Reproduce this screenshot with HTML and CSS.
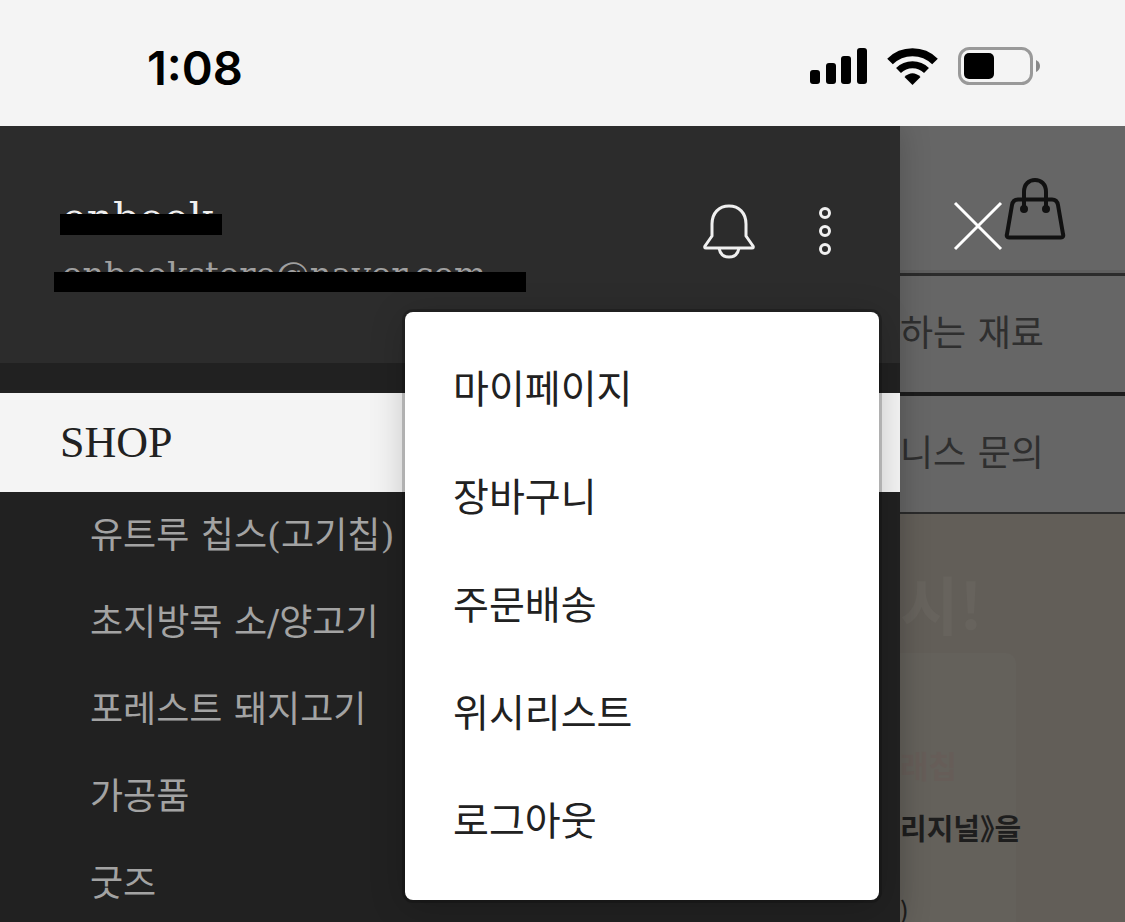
FILE: index.html
```
<!DOCTYPE html>
<html lang="ko">
<head>
    <meta charset="UTF-8">
    <meta name="viewport" content="width=device-width, initial-scale=1.0">
    <title>SHOP</title>
    <link rel="stylesheet" href="styles.css">
</head>
<body>
    <div class="status-bar">
        <span class="time">1:08</span>
        <div class="status-icons">
            <svg width="58" height="36" viewBox="0 0 58 36" aria-hidden="true">
                <rect x="1" y="22" width="10" height="14" rx="3"/>
                <rect x="17" y="15" width="10" height="21" rx="3"/>
                <rect x="32" y="8" width="10" height="28" rx="3"/>
                <rect x="48" y="0" width="10" height="36" rx="3"/>
            </svg>
            <svg width="51" height="37" viewBox="0 0 51 37" aria-hidden="true">
                <path d="M3 13.500 A32 32 0 0 1 48 13.500" fill="none" stroke="#000" stroke-width="8"/>
                <path d="M11.500 22.500 A20 20 0 0 1 39.500 22.500" fill="none" stroke="#000" stroke-width="7"/>
                <path d="M17.500 29 Q25.500 21.500 33.500 29 L25.500 37 Z"/>
            </svg>
            <svg width="83" height="38" viewBox="0 0 83 38" aria-hidden="true">
                <rect x="1.500" y="1.500" width="72" height="35" rx="10" fill="none" stroke="#999" stroke-width="3"/>
                <rect x="6" y="6" width="30" height="26" rx="5"/>
                <path d="M78 13 Q82 15 82 19 Q82 23 78 25 Z" fill="#888"/>
            </svg>
        </div>
    </div>

    <div class="screen">
        <!-- 사이드 메뉴 -->
        <aside class="drawer">
            <header class="drawer-header">
                <div class="user">
                    <div class="user-name"><span class="masked">onbook</span></div>
                    <div class="user-email"><span class="masked masked-wide">onbookstore@naver.com</span></div>
                </div>
                <div class="user-actions">
                    <button type="button" class="icon-btn" aria-label="알림">
                        <svg width="52" height="56" viewBox="0 0 52 56">
                            <path d="M8 33 V21 C8 10 15 3 25 3 C35 3 42 10 42 21 V33 L49 43 Q50 45 48 45 H2 Q0 45 1 43 Z"/>
                            <path d="M15 45 C16 51 20 54 25 54 C30 54 34 51 35 45"/>
                        </svg>
                    </button>
                    <button type="button" class="icon-btn" aria-label="더보기" aria-expanded="true">
                        <svg width="14" height="50" viewBox="0 0 14 50">
                            <circle cx="7" cy="7" r="4.500"/>
                            <circle cx="7" cy="25" r="4.500"/>
                            <circle cx="7" cy="43" r="4.500"/>
                        </svg>
                    </button>
                </div>
            </header>

            <nav class="categories">
                <h2><a href="#">SHOP</a></h2>
                <ul>
                    <li><a href="#">유트루 칩스(고기칩)</a></li>
                    <li><a href="#">초지방목 소/양고기</a></li>
                    <li><a href="#">포레스트 돼지고기</a></li>
                    <li><a href="#">가공품</a></li>
                    <li><a href="#">굿즈</a></li>
                </ul>
            </nav>

            <!-- 더보기 팝업 -->
            <ul class="popup">
                <li><a href="#">마이페이지</a></li>
                <li><a href="#">장바구니</a></li>
                <li><a href="#">주문배송</a></li>
                <li><a href="#">위시리스트</a></li>
                <li><a href="#">로그아웃</a></li>
            </ul>
        </aside>

        <!-- 뒤에 깔린 페이지 -->
        <main class="page">
            <div class="page-header">
                <button type="button" class="icon-btn close" aria-label="닫기">
                    <svg width="48" height="48" viewBox="0 0 48 48">
                        <path d="M1 1 L47 47 M47 1 L1 47"/>
                    </svg>
                </button>
                <button type="button" class="icon-btn bag" aria-label="장바구니">
                    <svg width="60" height="62" viewBox="0 0 60 62">
                        <path d="M13 21.500 H47 Q52 21.500 53 27 L58 56 Q59 59.500 56 59.500 H4 Q1 59.500 2 56 L7 27 Q8 21.500 13 21.500 Z"/>
                        <path d="M19 31 V14 C19 6 24 2 30 2 C36 2 41 6 41 14 V31"/>
                        <circle cx="19" cy="31" r="2"/>
                        <circle cx="41" cy="31" r="2"/>
                    </svg>
                </button>
            </div>
            <a class="page-row" href="#">하는 재료</a>
            <a class="page-row last" href="#">니스 문의</a>
            <section class="banner">
                <p class="banner-title">시!</p>
                <div class="banner-card">
                    <p class="banner-label">래칩</p>
                    <p class="banner-text">리지널》을</p>
                    <p class="banner-note">)</p>
                </div>
            </section>
        </main>
    </div>
</body>
</html>
```

FILE: styles.css
```
* {
    box-sizing: border-box;
}
body {
    margin: 0;
    min-height: 100vh;
    display: flex;
    flex-direction: column;
    font-family: "Liberation Serif", "Noto Sans CJK KR", serif;
    background: #212121;
}
ul, h2, p {
    margin: 0;
    padding: 0;
    list-style: none;
    font-weight: normal;
}
a {
    color: inherit;
    text-decoration: none;
}
.icon-btn {
    padding: 0;
    border: 0;
    background: none;
    color: #f0f0f0;
}
.icon-btn svg {
    display: block;
    fill: none;
    stroke: currentColor;
    stroke-width: 3;
    stroke-linejoin: round;
    overflow: visible;
}

/* status bar */
.status-bar {
    display: flex;
    justify-content: space-between;
    align-items: center;
    height: 126px;
    padding: 6px 84px 0 147px;
    background: #f4f4f4;
}
.time {
    padding-top: 3px;
    font-family: Inter, sans-serif;
    font-size: 47px;
    font-weight: 600;
    line-height: 56px;
}
.status-icons {
    display: flex;
    align-items: center;
    gap: 20px;
}

.screen {
    flex: 1;
    display: flex;
}

/* drawer */
.drawer {
    position: relative;
    z-index: 1;
    width: 80%;
    background: #212121;
    box-shadow: 0 0 30px rgba(0,0,0,0.2);
    clip-path: inset(0 -40px 0 0);
}
.drawer-header {
    display: flex;
    justify-content: space-between;
    height: 237px;
    padding: 64px 68px 0 62px;
    background: #2c2c2c;
}
.user {
    font-family: "DejaVu Serif", serif;
    line-height: 56px;
}
.user-name {
    font-size: 41px;
    color: #f0f0f0;
}
.user-email {
    font-size: 34px;
    color: #a0a0a0;
}
.masked {
    position: relative;
}
.masked::after {
    content: "";
    position: absolute;
    left: -2px;
    right: -8px;
    bottom: 7px;
    height: 21px;
    background: #000;
}
.masked-wide::after {
    left: -8px;
    right: -40px;
    bottom: 2px;
    height: 20px;
}
.user-actions {
    display: flex;
    align-items: center;
    gap: 62px;
    height: 82px;
}

.categories {
    padding-top: 30px;
}
.categories h2 {
    padding-left: 60px;
    font-size: 44px;
    line-height: 99px;
    color: #212121;
    background: #f4f4f4;
}
.categories li {
    padding-left: 90px;
    font-family: "DejaVu Serif", "Noto Sans CJK KR", serif;
    font-size: 36px;
    line-height: 87px;
    color: #a3a3a3;
}

/* popup */
.popup {
    position: absolute;
    top: 186px;
    right: 21px;
    width: 474px;
    padding: 24px 48px;
    border-radius: 8px;
    background: #fff;
    box-shadow: 0 0 0 3px rgba(0,0,0,0.2), 0 6px 36px rgba(0,0,0,0.2);
    font-size: 39px;
    line-height: 108px;
    color: #212121;
}

/* page behind the drawer */
.page {
    flex: 1;
    display: flex;
    flex-direction: column;
    overflow: hidden;
    background: #666;
    color: #2f2f2f;
}
.page-header {
    display: flex;
    justify-content: flex-end;
    align-items: flex-start;
    gap: 3px;
    height: 150px;
    padding: 52px 60px 0 0;
    border-bottom: 3px solid #2b2b2b;
    box-shadow: inset 0 -3px #5f5f5f;
}
.close {
    padding-top: 24px;
    color: #fff;
}
.bag {
    color: #111;
}
.bag svg {
    stroke-width: 4;
}
.page-row {
    height: 120px;
    border-bottom: 4px solid #1c1c1c;
    font-family: "DejaVu Serif", "Noto Sans CJK KR", serif;
    font-size: 36px;
    line-height: 116px;
}
.page-row.last {
    height: 118px;
    border-bottom: 2px solid #2b2b2b;
}
.banner {
    flex: 1;
    display: flex;
    flex-direction: column;
    padding-top: 44px;
    background: #625e58;
    font-family: "Noto Sans CJK KR", sans-serif;
}
.banner-title {
    padding-bottom: 7px;
    font-size: 64px;
    font-weight: bold;
    line-height: 88px;
    color: #67635d;
}
.banner-card {
    flex: 1;
    width: 116px;
    padding-top: 84px;
    border-radius: 0 10px 0 0;
    background: #64615b;
    white-space: nowrap;
}
.banner-label {
    font-size: 31px;
    font-weight: bold;
    line-height: 56px;
    color: #665d58;
}
.banner-text {
    padding-top: 10px;
    font-size: 29px;
    font-weight: bold;
    line-height: 48px;
    font-feature-settings: "halt";
    color: #1e1e1e;
}
.banner-note {
    padding-top: 42px;
    font-size: 24px;
    font-weight: 500;
    line-height: 36px;
    height: 60px;
    color: #1e1e1e;
}
```
